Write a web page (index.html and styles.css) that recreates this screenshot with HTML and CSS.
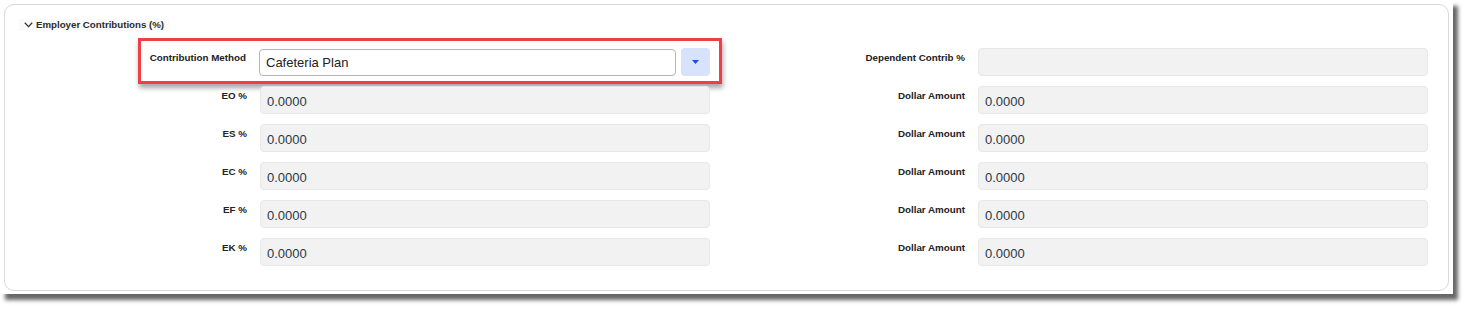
FILE: index.html
```html
<!DOCTYPE html>
<html>

<head>
    <title>Employer Contributions</title>
    <link rel="stylesheet" href="styles.css">
</head>

<body>
    <div class="shot">
        <div class="card">
            <div class="section-head">
                <svg class="chevron" width="9" height="6" viewBox="0 0 9 6">
                    <path d="M0.8 0.8 L4.5 4.6 L8.2 0.8" fill="none" stroke="#333" stroke-width="1.3"/>
                </svg>
                <span>Employer Contributions (%)</span>
            </div>

            <div class="rows">
                <div class="row">
                    <div class="field highlighted">
                        <label>Contribution Method</label>
                        <div class="select-wrap">
                            <div class="select">Cafeteria Plan</div>
                            <button class="drop-btn">
                                <svg width="7" height="4" viewBox="0 0 7 4"><path d="M0 0 L7 0 L3.5 4 Z" fill="#1c4fd6"/></svg>
                            </button>
                        </div>
                        <div class="callout"></div>
                    </div>
                    <div class="field">
                        <label>Dependent Contrib %</label>
                        <div class="input"></div>
                    </div>
                </div>
                <div class="row">
                    <div class="field">
                        <label>EO %</label>
                        <div class="input">0.0000</div>
                    </div>
                    <div class="field">
                        <label>Dollar Amount</label>
                        <div class="input">0.0000</div>
                    </div>
                </div>
                <div class="row">
                    <div class="field">
                        <label>ES %</label>
                        <div class="input">0.0000</div>
                    </div>
                    <div class="field">
                        <label>Dollar Amount</label>
                        <div class="input">0.0000</div>
                    </div>
                </div>
                <div class="row">
                    <div class="field">
                        <label>EC %</label>
                        <div class="input">0.0000</div>
                    </div>
                    <div class="field">
                        <label>Dollar Amount</label>
                        <div class="input">0.0000</div>
                    </div>
                </div>
                <div class="row">
                    <div class="field">
                        <label>EF %</label>
                        <div class="input">0.0000</div>
                    </div>
                    <div class="field">
                        <label>Dollar Amount</label>
                        <div class="input">0.0000</div>
                    </div>
                </div>
                <div class="row">
                    <div class="field">
                        <label>EK %</label>
                        <div class="input">0.0000</div>
                    </div>
                    <div class="field">
                        <label>Dollar Amount</label>
                        <div class="input">0.0000</div>
                    </div>
                </div>
            </div>
        </div>
    </div>
</body>

</html>
```

FILE: styles.css
```css
body {
    margin: 0;
    padding: 0 0 15px 0;
    background: #fff;
    font-family: "Liberation Sans", Arial, sans-serif;
    color: #333;
}

.shot {
    width: 1453px;
    height: 294px;
    background: #fff;
    box-shadow: 5px 6px 4px rgba(0, 0, 0, 0.6);
    padding: 4px 0 0 4px;
    box-sizing: border-box;
}

.card {
    width: 1445px;
    height: 287px;
    box-sizing: border-box;
    border: 1px solid #d9d9d9;
    border-radius: 10px;
    padding: 14px 0 0 12px;
}

.section-head {
    display: flex;
    width: fit-content;
    align-items: center;
    gap: 3px;
    height: 12px;
    margin-left: 2px;
    padding: 0 5px;
    background: #fafafa;
    font-size: 9.7px;
    line-height: 12px;
    font-weight: bold;
    color: #2b2b2b;
}

.chevron {
    display: block;
}

.rows {
    display: flex;
    flex-direction: column;
    gap: 10px;
    margin-top: 17px;
}

.row {
    display: flex;
    gap: 25px;
}

.field {
    position: relative;
    display: flex;
    gap: 13px;
    width: 693px;
}

.field label {
    width: 230px;
    text-align: right;
    font-size: 9.8px;
    font-weight: bold;
    color: #222;
    padding-top: 4px;
}

.input {
    width: 450px;
    height: 28px;
    box-sizing: border-box;
    background: #f2f2f2;
    border: 1px solid #e8e8e8;
    border-radius: 4px;
    padding: 7px 0 0 6px;
    font-size: 13px;
    color: #2a3848;
}

.select-wrap {
    display: flex;
    gap: 5px;
    width: 451px;
}

.select {
    width: 417px;
    box-sizing: border-box;
    margin-top: 1px;
    height: 27px;
    border: 1px solid #b5b5b5;
    border-radius: 4px;
    background: #fff;
    padding: 5px 0 0 6px;
    font-size: 13px;
    color: #222;
}

.drop-btn {
    width: 29px;
    height: 28px;
    border: none;
    border-radius: 4px;
    background: #d6e3fb;
    display: flex;
    align-items: center;
    justify-content: center;
    padding: 0;
}

.callout {
    position: absolute;
    left: 121px;
    top: -10px;
    width: 584px;
    height: 46px;
    box-sizing: border-box;
    border: 3px solid #ef3f46;
    box-shadow: 1px 4px 5px rgba(0, 0, 0, 0.35);
    pointer-events: none;
}
```
